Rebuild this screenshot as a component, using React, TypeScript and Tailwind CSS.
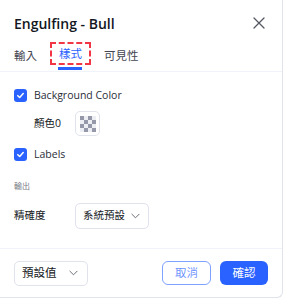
import React from 'react';

const Check = () => (
  <span className="flex h-[13px] w-[13px] items-center justify-center rounded-[3px] bg-[#2962ff]">
    <svg width="9" height="9" viewBox="0 0 10 10" fill="none">
      <path d="M2 5.2 4.1 7.2 8 2.9" stroke="white" strokeWidth="1.7" strokeLinecap="round" strokeLinejoin="round" />
    </svg>
  </span>
);

const Chevron = () => (
  <svg width="9" height="6" viewBox="0 0 10 6" fill="none">
    <path d="M1 1l4 4 4-4" stroke="#6a6d78" strokeWidth="1.1" strokeLinecap="round" strokeLinejoin="round" />
  </svg>
);

const Swatch = () => {
  const cells = Array.from({ length: 16 }, (_, i) => (Math.floor(i / 4) + i) % 2 === 0);
  return (
    <div className="flex h-[25px] w-[25px] items-center justify-center rounded-[5px] border border-[#e0e3eb]">
      <div className="grid h-[16px] w-[16px] grid-cols-4">
        {cells.map((dark, i) => (
          <span key={i} className={dark ? 'bg-[#9598a9]' : 'bg-[#eceef4]'} />
        ))}
      </div>
    </div>
  );
};

export default function App() {
  return (
    <div className="h-[300px] w-[284px] bg-white text-[#131722]" style={{ fontFamily: '"Open Sans", "Noto Sans CJK TC", sans-serif' }}>
      <div className="flex h-[298px] w-[283px] flex-col rounded-br-[6px] border-r border-b border-[#e0e3eb]">
        {/* header */}
        <div className="flex h-[44px] items-center justify-between pl-[14px] pr-[17px] pt-[2px]">
          <span className="text-[14px] font-semibold">Engulfing - Bull</span>
          <svg width="12" height="12" viewBox="0 0 12 12" fill="none">
            <path d="M1 1l10 10M11 1 1 11" stroke="#555862" strokeWidth="1.3" strokeLinecap="round" />
          </svg>
        </div>

        {/* tabs */}
        <div className="flex h-[28px] items-start border-b border-[#f0f3fa] pl-[14px] text-[11.5px] text-[#434651]">
          <span className="mt-[1px] leading-[22px]">輸入</span>
          <span className="relative ml-[13px] mt-[-2px] flex h-[23px] w-[41px] items-center justify-center border-2 border-dashed border-[#f23645] text-[#2962ff]">
            樣式
            <span className="absolute bottom-[-7px] left-[6px] h-[3px] w-[24px] bg-[#2962ff]" />
          </span>
          <span className="ml-[13px] mt-[1px] leading-[22px]">可見性</span>
        </div>

        {/* content */}
        <div className="flex flex-1 flex-col px-[14px] text-[10.5px] text-[#131722]">
          <div className="mt-[17px] flex h-[13px] items-center gap-[7px]">
            <Check />
            <span className="text-[#2a2e39]">Background Color</span>
          </div>
          <div className="mt-[9px] flex h-[25px] items-center">
            <span className="w-[41px] pl-[20px] box-content">顏色0</span>
            <Swatch />
          </div>
          <div className="mt-[12px] flex h-[13px] items-center gap-[7px]">
            <Check />
            <span className="text-[#2a2e39]">Labels</span>
          </div>
          <div className="mt-[18px] text-[8px] leading-[14px] text-[#787b86]">輸出</div>
          <div className="mt-[10px] flex h-[26px] items-center">
            <span className="w-[61px]">精確度</span>
            <div className="flex h-[26px] w-[74px] items-center justify-between rounded-[5px] border border-[#e0e3eb] pl-[7px] pr-[8px]">
              <span>系統預設</span>
              <Chevron />
            </div>
          </div>
        </div>

        {/* footer */}
        <div className="flex h-[49px] items-center justify-between border-t border-[#f0f3fa] px-[14px] text-[11.5px]">
          <div className="flex h-[25px] w-[74px] items-center justify-between rounded-[5px] border border-[#e0e3eb] pl-[7px] pr-[9px]">
            <span>預設值</span>
            <Chevron />
          </div>
          <div className="flex gap-[9px]">
            <button className="flex h-[24px] w-[49px] items-center justify-center rounded-[6px] border border-[#2962ff]/60 text-[#2962ff]/70">
              取消
            </button>
            <button className="flex h-[24px] w-[48px] items-center justify-center rounded-[6px] bg-[#2962ff] text-white">
              確認
            </button>
          </div>
        </div>
      </div>
    </div>
  );
}
